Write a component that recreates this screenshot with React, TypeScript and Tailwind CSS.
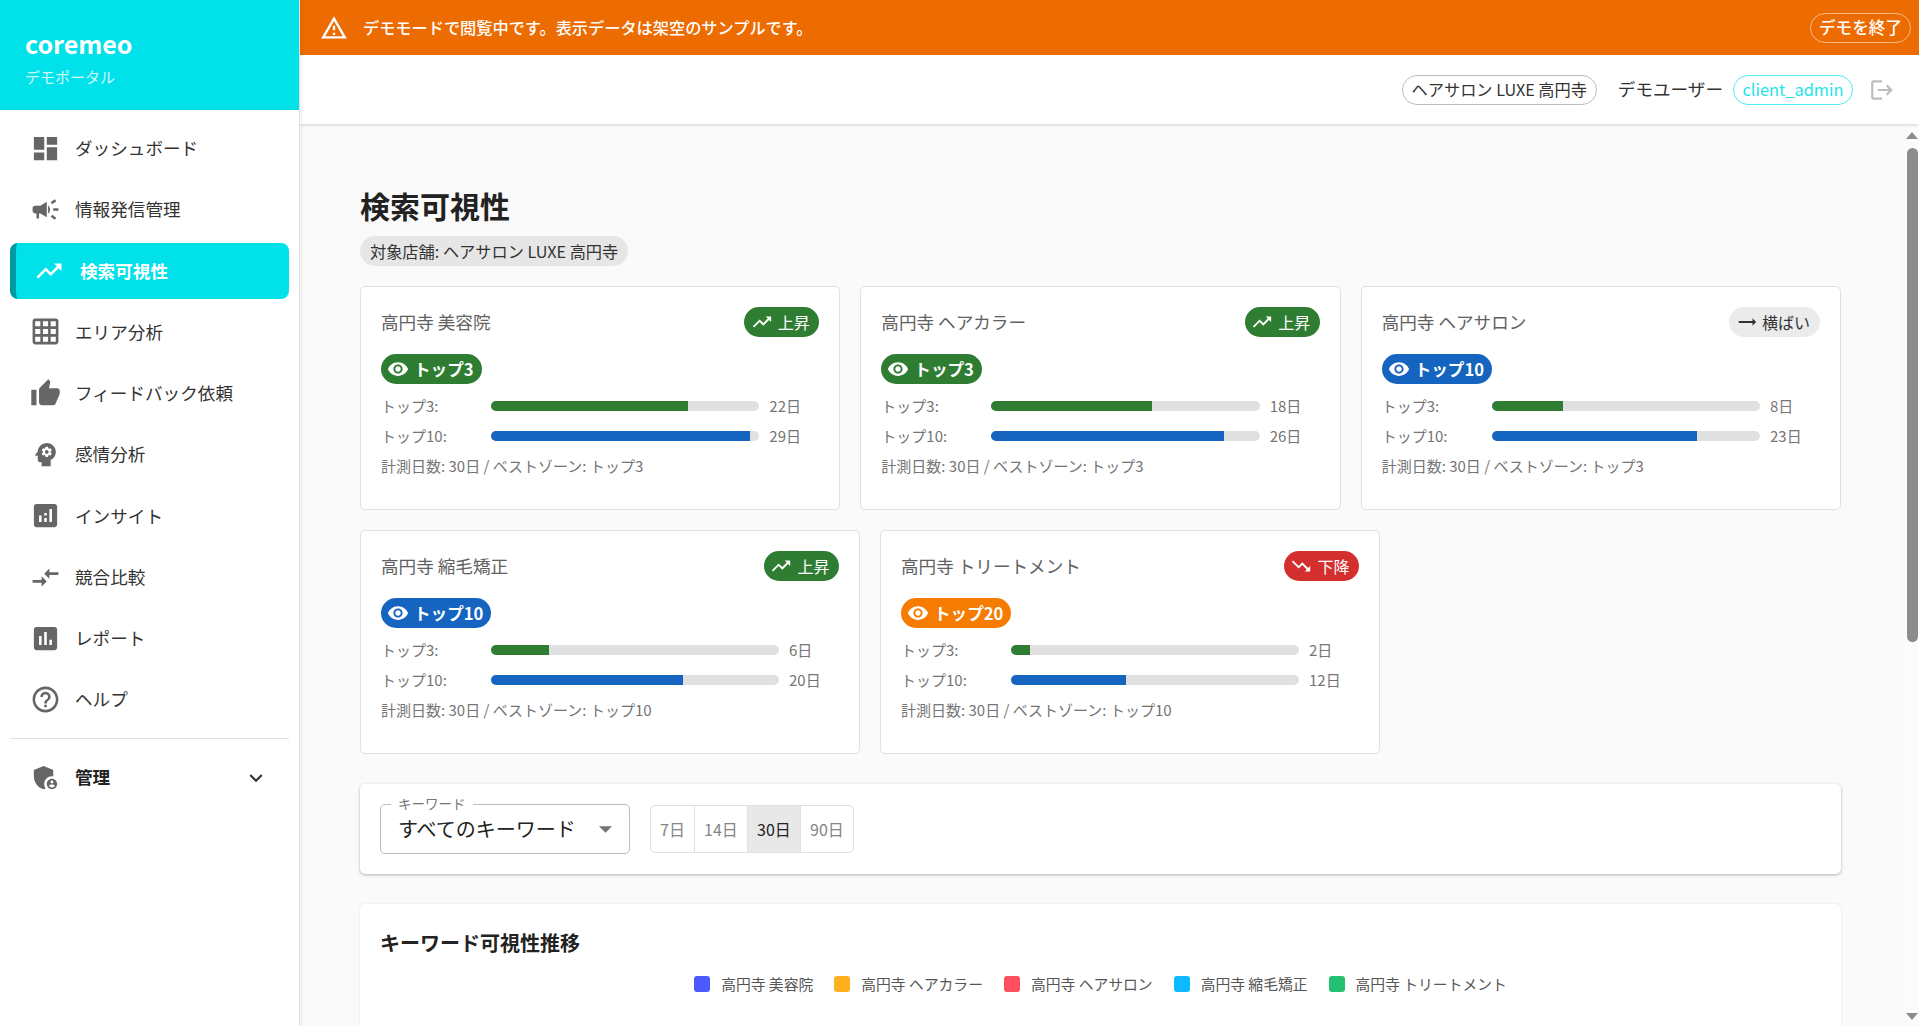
import React from "react";

const P = {
  dashboard: "M3 13h8V3H3v10zm0 8h8v-6H3v6zm10 0h8V11h-8v10zm0-18v6h8V3h-8z",
  campaign: "M18 11v2h4v-2h-4zm-2 6.61c.96.71 2.21 1.65 3.2 2.39.4-.53.8-1.07 1.2-1.6-.99-.74-2.24-1.68-3.2-2.4-.4.54-.8 1.08-1.2 1.61zM20.4 5.6c-.4-.53-.8-1.07-1.2-1.6-.99.74-2.24 1.68-3.2 2.4.4.53.8 1.07 1.2 1.6.96-.72 2.21-1.65 3.2-2.4zM4 9c-1.1 0-2 .9-2 2v2c0 1.1.9 2 2 2h1v4h2v-4h1l5 3V6L8 9H4zm11.5 3c0-1.33-.58-2.53-1.5-3.35v6.69c.92-.81 1.5-2.01 1.5-3.34z",
  up: "M16 6l2.29 2.29-4.88 4.88-4-4L2 16.59 3.41 18l6-6 4 4 6.3-6.29L22 12V6z",
  down: "M16 18l2.29-2.29-4.88-4.88-4 4L2 7.41 3.41 6l6 6 4-4 6.3 6.29L22 12v6z",
  flat: "M22 12l-4-4v3H3v2h15v3z",
  grid: "M20 2H4c-1.1 0-2 .9-2 2v16c0 1.1.9 2 2 2h16c1.1 0 2-.9 2-2V4c0-1.1-.9-2-2-2zM8 20H4v-4h4v4zm0-6H4v-4h4v4zm0-6H4V4h4v4zm6 12h-4v-4h4v4zm0-6h-4v-4h4v4zm0-6h-4V4h4v4zm6 12h-4v-4h4v4zm0-6h-4v-4h4v4zm0-6h-4V4h4v4z",
  thumb: "M1 21h4V9H1v12zm22-11c0-1.1-.9-2-2-2h-6.31l.95-4.57.03-.32c0-.41-.17-.79-.44-1.06L14.17 1 7.59 7.59C7.22 7.95 7 8.45 7 9v10c0 1.1.9 2 2 2h9c.83 0 1.54-.5 1.84-1.22l3.02-7.05c.09-.23.14-.47.14-.73v-2z",
  psychology: "M13 8.57c-.79 0-1.43.64-1.43 1.43s.64 1.43 1.43 1.43 1.43-.64 1.43-1.43-.64-1.43-1.43-1.43zM13 3C9.25 3 6.2 5.94 6.02 9.64L4.1 12.2c-.25.33-.01.8.4.8H6v3c0 1.1.9 2 2 2h1v3h7v-4.68c2.36-1.12 4-3.53 4-6.32 0-3.87-3.13-7-7-7zm3 7c0 .13-.01.26-.02.39l.83.66c.08.06.1.16.05.25l-.8 1.39c-.05.09-.16.12-.24.09l-.99-.4c-.21.16-.43.29-.67.39L14 13.83c-.01.1-.1.17-.2.17h-1.6c-.1 0-.18-.07-.2-.17l-.15-1.06c-.25-.1-.47-.23-.68-.39l-.99.4c-.09.03-.2 0-.25-.09l-.8-1.39c-.05-.08-.03-.19.05-.25l.84-.66c-.01-.13-.02-.26-.02-.39s.02-.27.04-.39l-.85-.66c-.08-.06-.1-.16-.05-.26l.8-1.38c.05-.09.15-.12.24-.09l1 .4c.2-.15.43-.29.67-.39L12 6.17c.02-.1.1-.17.2-.17h1.6c.1 0 .18.07.2.17l.15 1.06c.24.1.46.23.67.39l1-.4c.09-.03.2 0 .24.09l.8 1.38c.05.09.03.2-.05.26l-.85.66c.03.12.04.25.04.39z",
  analytics: "M19 3H5c-1.1 0-2 .9-2 2v14c0 1.1.9 2 2 2h14c1.1 0 2-.9 2-2V5c0-1.1-.9-2-2-2zM9 17H7v-5h2v5zm4 0h-2v-3h2v3zm0-5h-2v-2h2v2zm4 5h-2V7h2v10z",
  compare: "M9.01 14H2v2h7.01v3L13 15l-3.99-4v3zm5.98-1v-3H22V8h-7.01V5L11 9l3.99 4z",
  assessment: "M19 3H5c-1.1 0-2 .9-2 2v14c0 1.1.9 2 2 2h14c1.1 0 2-.9 2-2V5c0-1.1-.9-2-2-2zM9 17H7v-7h2v7zm4 0h-2V7h2v10zm4 0h-2v-4h2v4z",
  help: "M11 18h2v-2h-2v2zm1-16C6.48 2 2 6.48 2 12s4.48 10 10 10 10-4.48 10-10S17.52 2 12 2zm0 18c-4.41 0-8-3.59-8-8s3.59-8 8-8 8 3.59 8 8-3.59 8-8 8zm0-14c-2.21 0-4 1.79-4 4h2c0-1.1.9-2 2-2s2 .9 2 2c0 2-3 1.75-3 5h2c0-2.25 3-2.5 3-5 0-2.21-1.79-4-4-4z",
  admin: "M17 11c.34 0 .67.04 1 .09V6.27L10.5 3 3 6.27v4.91c0 4.54 3.2 8.79 7.5 9.82.55-.13 1.08-.32 1.6-.55-.69-.98-1.1-2.17-1.1-3.45 0-3.31 2.69-6 6-6zM17 13c-2.21 0-4 1.79-4 4s1.79 4 4 4 4-1.79 4-4-1.79-4-4-4zm0 1.38c.62 0 1.12.51 1.12 1.12s-.51 1.12-1.12 1.12-1.12-.51-1.12-1.12.5-1.12 1.12-1.12zm0 5.37c-.93 0-1.74-.46-2.24-1.17.05-.72 1.51-1.08 2.24-1.08s2.19.36 2.24 1.08c-.5.71-1.31 1.17-2.24 1.17z",
  expand: "M16.59 8.59 12 13.17 7.41 8.59 6 10l6 6 6-6z",
  eye: "M12 4.5C7 4.5 2.73 7.61 1 12c1.73 4.39 6 7.5 11 7.5s9.27-3.11 11-7.5c-1.73-4.39-6-7.5-11-7.5zM12 17c-2.76 0-5-2.24-5-5s2.24-5 5-5 5 2.24 5 5-2.24 5-5 5zm0-8c-1.66 0-3 1.34-3 3s1.34 3 3 3 3-1.34 3-3-1.34-3-3-3z",
  warn: "M12 5.99 19.53 19H4.47L12 5.99M12 2 1 21h22L12 2zm1 14h-2v2h2v-2zm0-6h-2v4h2v-4z",
  logout: "M17 7l-1.41 1.41L18.17 11H8v2h10.17l-2.58 2.58L17 17l5-5zM4 5h8V3H4c-1.1 0-2 .9-2 2v14c0 1.1.9 2 2 2h8v-2H4V5z",
};

function Icon({ d, className }: { d: string; className: string }) {
  return (
    <svg viewBox="0 0 24 24" fill="currentColor" className={className}>
      <path d={d} />
    </svg>
  );
}

const nav: [string, string][] = [
  ["ダッシュボード", P.dashboard],
  ["情報発信管理", P.campaign],
  ["検索可視性", P.up],
  ["エリア分析", P.grid],
  ["フィードバック依頼", P.thumb],
  ["感情分析", P.psychology],
  ["インサイト", P.analytics],
  ["競合比較", P.compare],
  ["レポート", P.assessment],
  ["ヘルプ", P.help],
];

function Sidebar() {
  return (
    <aside className="w-[300px] shrink-0 h-full bg-white border-r border-[#e0e0e0] shadow-[0_0_6px_rgba(0,0,0,0.10)] z-20 flex flex-col">
      <div className="h-[110px] bg-[#00e1ea] text-white pl-[25px] flex flex-col">
        <div className="text-[25px] leading-[30px] font-bold mt-[28px]">coremeo</div>
        <div className="text-[15px] leading-[20px] mt-[9px] text-white/80">デモポータル</div>
      </div>
      <nav className="px-[10px] pt-[10px]">
        {nav.map(([label, d]) =>
          label === "検索可視性" ? (
            <div key={label} className="h-[56px] mt-[1.6px] mb-[5.3px] flex items-center bg-[#00e1ea] rounded-[8px] border-l-[6px] border-[#009aa3] pl-[18px] text-white">
              <Icon d={d} className="w-[30px] h-[30px] mr-[16px] shrink-0" />
              <span className="text-[17.6px] font-bold relative top-px">{label}</span>
            </div>
          ) : (
            <div key={label} className="h-[56px] mb-[5.3px] flex items-center pl-[20px] text-[#333333]">
              <Icon d={d} className="w-[31px] h-[31px] mr-[14px] shrink-0 text-[#666666]" />
              <span className="text-[17.6px]">{label}</span>
            </div>
          )
        )}
        <div className="h-px bg-[#e0e0e0] mt-[10px]" />
        <div className="h-[56px] mt-[11px] flex items-center pl-[20px] pr-[20px] text-[#222222]">
          <Icon d={P.admin} className="w-[31px] h-[31px] mr-[14px] shrink-0 text-[#666666]" />
          <span className="text-[17.6px] font-bold flex-1">管理</span>
          <Icon d={P.expand} className="w-[26px] h-[26px] shrink-0 text-[#333333]" />
        </div>
      </nav>
    </aside>
  );
}

function Header() {
  return (
    <>
      <div className="h-[55px] shrink-0 bg-[#ed6c02] text-white flex items-center pl-[20px] pr-[8px]">
        <Icon d={P.warn} className="w-[28px] h-[28px] mr-[15px] shrink-0" />
        <span className="text-[16.2px] font-medium flex-1">デモモードで閲覧中です。表示データは架空のサンプルです。</span>
        <span className="h-[30px] w-[101px] rounded-full border border-white/50 flex items-center justify-center text-[16.6px] font-medium">デモを終了</span>
      </div>
      <div className="h-[69px] shrink-0 bg-white shadow-[0_1px_3px_rgba(0,0,0,0.16)] z-10 flex items-center justify-end pr-[24px] text-[#333333]">
        <span className="h-[30px] w-[195px] rounded-full border border-[#bdbdbd] flex items-center justify-center text-[16.2px]">ヘアサロン LUXE 高円寺</span>
        <span className="text-[17.6px] ml-[21px]">デモユーザー</span>
        <span className="h-[30px] w-[120px] ml-[10px] rounded-full border border-[#4deef5] text-[#1fe3ec] flex items-center justify-center text-[16.4px]">client_admin</span>
        <Icon d={P.logout} className="w-[26px] h-[26px] ml-[16px] text-[#bdbdbd]" />
      </div>
    </>
  );
}

type CardData = {
  title: string;
  trend: "上昇" | "横ばい" | "下降";
  zone: "トップ3" | "トップ10" | "トップ20";
  t3: number;
  t10: number;
  best: string;
};

function Trend({ trend }: { trend: CardData["trend"] }) {
  if (trend === "上昇")
    return (
      <span className="h-[30px] w-[75px] rounded-full bg-[#2e7d32] text-white flex items-center justify-center pr-[3px] text-[16px] shrink-0">
        <Icon d={P.up} className="w-[22px] h-[22px] mr-[5px]" />
        上昇
      </span>
    );
  if (trend === "下降")
    return (
      <span className="h-[30px] w-[75px] rounded-full bg-[#d32f2f] text-white flex items-center justify-center pr-[3px] text-[16px] shrink-0">
        <Icon d={P.down} className="w-[22px] h-[22px] mr-[5px]" />
        下降
      </span>
    );
  return (
    <span className="h-[30px] w-[91px] rounded-full bg-[#ebebeb] text-[#333333] flex items-center justify-center pr-[3px] text-[16px] shrink-0">
      <Icon d={P.flat} className="w-[22px] h-[22px] mr-[4px]" />
      横ばい
    </span>
  );
}

function Zone({ zone }: { zone: CardData["zone"] }) {
  const bg = zone === "トップ3" ? "bg-[#2e7d32]" : zone === "トップ10" ? "bg-[#1565c0]" : "bg-[#f57c00]";
  return (
    <span className={`h-[30px] inline-flex items-center rounded-full text-white text-[16.6px] font-bold pl-[6px] pr-[8px] ${bg}`}>
      <Icon d={P.eye} className="w-[22px] h-[22px] mr-[5px]" />
      {zone}
    </span>
  );
}

function Row({ label, value, color }: { label: string; value: number; color: string }) {
  return (
    <div className="flex items-center h-[30px] text-[15px] text-[#757575]">
      <span className="w-[110px] shrink-0">{label}</span>
      <div className="flex-1 h-[10px] rounded-[5px] bg-[#e0e0e0] overflow-hidden">
        <div className={`h-full ${color}`} style={{ width: `${(value / 30) * 100}%` }} />
      </div>
      <span className="w-[60px] shrink-0 pl-[10px]">{value}日</span>
    </div>
  );
}

function Card({ c, className }: { c: CardData; className: string }) {
  return (
    <div className={`h-[224px] bg-white border border-[#e0e0e0] rounded-[5px] pt-[20px] px-[20px] ${className}`}>
      <div className="flex items-center justify-between h-[30px]">
        <span className="text-[17.6px] text-[#616161]">{c.title}</span>
        <Trend trend={c.trend} />
      </div>
      <div className="mt-[17px] h-[30px]">
        <Zone zone={c.zone} />
      </div>
      <div className="mt-[7px]">
        <Row label="トップ3:" value={c.t3} color="bg-[#2e7d32]" />
        <Row label="トップ10:" value={c.t10} color="bg-[#1565c0]" />
      </div>
      <div className="text-[15px] text-[#757575] mt-[5px] leading-[20px]">計測日数: 30日 / ベストゾーン: {c.best}</div>
    </div>
  );
}

const row1: CardData[] = [
  { title: "高円寺 美容院", trend: "上昇", zone: "トップ3", t3: 22, t10: 29, best: "トップ3" },
  { title: "高円寺 ヘアカラー", trend: "上昇", zone: "トップ3", t3: 18, t10: 26, best: "トップ3" },
  { title: "高円寺 ヘアサロン", trend: "横ばい", zone: "トップ10", t3: 8, t10: 23, best: "トップ3" },
];
const row2: CardData[] = [
  { title: "高円寺 縮毛矯正", trend: "上昇", zone: "トップ10", t3: 6, t10: 20, best: "トップ10" },
  { title: "高円寺 トリートメント", trend: "下降", zone: "トップ20", t3: 2, t10: 12, best: "トップ10" },
];

const legend: [string, string][] = [
  ["高円寺 美容院", "bg-[#4a5aff]"],
  ["高円寺 ヘアカラー", "bg-[#ffb020]"],
  ["高円寺 ヘアサロン", "bg-[#ff5060]"],
  ["高円寺 縮毛矯正", "bg-[#0dbaff]"],
  ["高円寺 トリートメント", "bg-[#22c070]"],
];

function Filter() {
  const ranges = ["7日", "14日", "30日", "90日"];
  const widths = ["w-[43px]", "w-[53px]", "w-[53px]", "w-[53px]"];
  return (
    <div className="h-[90px] mt-[30px] bg-white rounded-[5px] shadow-[0_1px_3px_rgba(0,0,0,0.3)] flex items-center pl-[20px]">
      <div className="relative w-[250px] h-[50px] border border-[#bdbdbd] rounded-[5px] flex items-center pl-[17px] pr-[17px] text-[20px] text-[#222222]">
        <span className="absolute left-[10px] -top-[11px] bg-white px-[7px] text-[13.5px] leading-[18px] text-[#757575]">キーワード</span>
        <span className="flex-1">すべてのキーワード</span>
        <svg viewBox="0 0 12 6" className="w-[13px] h-[7px] text-[#757575]" fill="currentColor">
          <path d="M0 0h12L6 6z" />
        </svg>
      </div>
      <div className="ml-[20px] h-[48px] flex border border-[#e0e0e0] rounded-[5px] overflow-hidden">
        {ranges.map((r, i) => (
          <div
            key={r}
            className={`${widths[i]} flex items-center justify-center text-[16px] ${i > 0 ? "border-l border-[#e0e0e0]" : ""} ${r === "30日" ? "bg-[#e8e8e8] text-[#222222]" : "text-[#858585]"}`}
          >
            {r}
          </div>
        ))}
      </div>
    </div>
  );
}

function Chart() {
  return (
    <div className="mt-[30px] h-[300px] bg-white rounded-[5px] shadow-[0_0_2px_rgba(0,0,0,0.12)] px-[20px] pt-[25px]">
      <div className="text-[20px] leading-[28px] font-bold text-[#222222]">キーワード可視性推移</div>
      <div className="flex justify-center gap-[21px] mt-[17px] text-[14.8px] leading-[20px] text-[#555555]">
        {legend.map(([t, c]) => (
          <div key={t} className="flex items-center">
            <span className={`w-[16px] h-[16px] rounded-[3px] mr-[11px] ${c}`} />
            {t}
          </div>
        ))}
      </div>
    </div>
  );
}

function Scrollbar() {
  return (
    <div className="w-[14px] shrink-0 flex flex-col items-center bg-[#fbfbfb] pt-[8px] pb-[6px]">
      <div className="w-0 h-0 border-x-[6px] border-x-transparent border-b-[7px] border-b-[#8c8c8c]" />
      <div className="w-[11px] h-[494px] mt-[9px] rounded-full bg-[#8c8c8c]" />
      <div className="flex-1" />
      <div className="w-0 h-0 border-x-[6px] border-x-transparent border-t-[7px] border-t-[#8c8c8c]" />
    </div>
  );
}

export default function App() {
  return (
    <div className="flex w-full h-screen overflow-hidden bg-[#fafafa] font-['Noto_Sans_CJK_JP','Noto_Sans',sans-serif]">
      <Sidebar />
      <div className="flex-1 min-w-0 flex flex-col h-full">
        <Header />
        <div className="flex-1 min-h-0 flex">
          <main className="flex-1 min-w-0 overflow-hidden pl-[60px] pr-[64px] pt-[58px]">
            <h1 className="text-[30px] leading-[46px] font-bold text-[#222222]">検索可視性</h1>
            <div className="flex items-center h-[30px] mt-[8px] rounded-full bg-[#e6e6e6] pl-[10px] text-[16.2px] text-[#333333] w-[268px] whitespace-nowrap">対象店舗: ヘアサロン LUXE 高円寺</div>
            <div className="flex gap-[20px] mt-[20px]">
              {row1.map((c) => (
                <Card key={c.title} c={c} className="flex-1" />
              ))}
            </div>
            <div className="flex gap-[20px] mt-[20px]">
              {row2.map((c) => (
                <Card key={c.title} c={c} className="w-[500px]" />
              ))}
            </div>
            <Filter />
            <Chart />
          </main>
          <Scrollbar />
        </div>
      </div>
    </div>
  );
}
